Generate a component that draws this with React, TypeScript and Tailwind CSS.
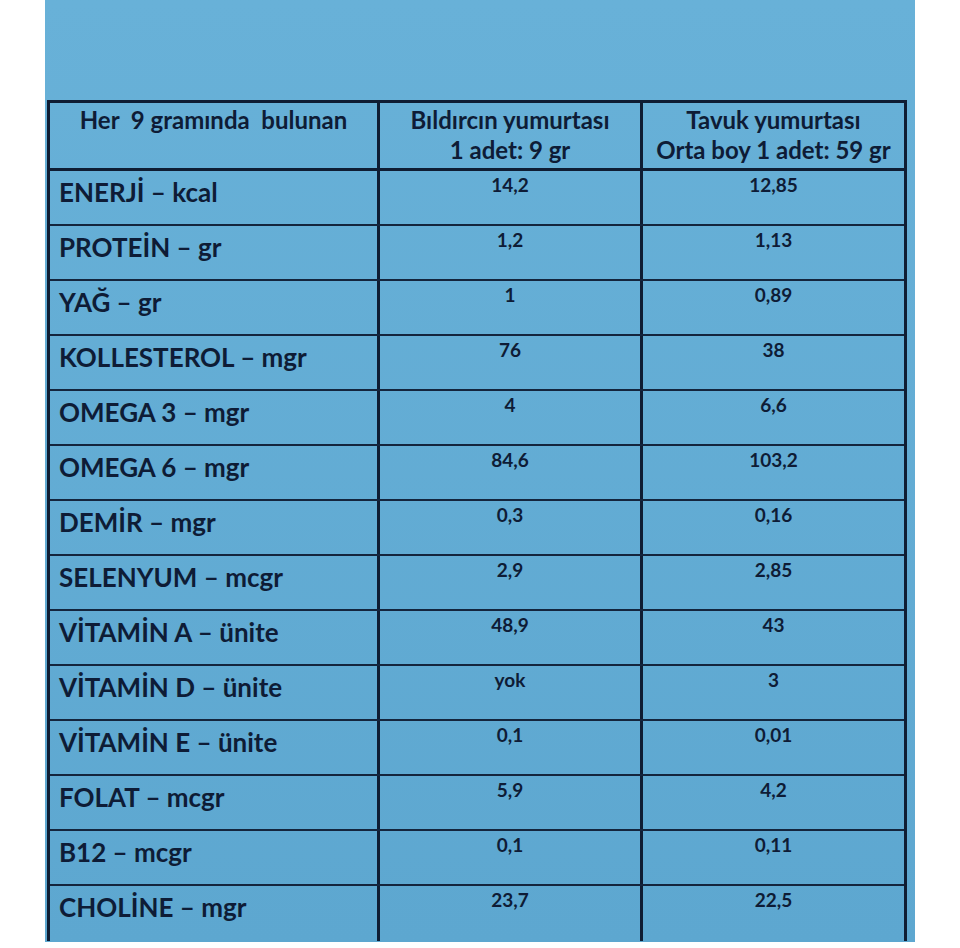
const rows: [string, string, string][] = [
  ['ENERJİ – kcal', '14,2', '12,85'],
  ['PROTEİN – gr', '1,2', '1,13'],
  ['YAĞ – gr', '1', '0,89'],
  ['KOLLESTEROL – mgr', '76', '38'],
  ['OMEGA 3 – mgr', '4', '6,6'],
  ['OMEGA 6 – mgr', '84,6', '103,2'],
  ['DEMİR – mgr', '0,3', '0,16'],
  ['SELENYUM – mcgr', '2,9', '2,85'],
  ['VİTAMİN A – ünite', '48,9', '43'],
  ['VİTAMİN D – ünite', 'yok', '3'],
  ['VİTAMİN E – ünite', '0,1', '0,01'],
  ['FOLAT – mcgr', '5,9', '4,2'],
  ['B12 – mcgr', '0,1', '0,11'],
  ['CHOLİNE – mgr', '23,7', '22,5'],
];

export default function App() {
  return (
    <div className="w-[960px] h-[948px] bg-white overflow-hidden font-['Lato',sans-serif] font-bold text-[#0e1c36]">
      <div className="ml-[45px] w-[870px] h-[942px] bg-gradient-to-b from-[#68b1d8] to-[#5da7d0] pt-[100px] pl-[2px] overflow-hidden">
        <div className="w-[860px] border-l-[3px] border-t-[3px] border-r-[3px] border-[#0f1d33]">
          <div className="grid grid-cols-[330px_263px_1fr] h-[68px] border-b-[3px] border-[#0f1d33] text-[24px] leading-[30px]">
            <div className="border-r-[3px] border-[#0f1d33] text-center pt-[2px] whitespace-pre">Her  9 gramında  bulunan</div>
            <div className="border-r-[3px] border-[#0f1d33] text-center pt-[2px]">
              <div>Bıldırcın yumurtası</div>
              <div>1 adet: 9 gr</div>
            </div>
            <div className="text-center pt-[2px] whitespace-nowrap">
              <div>Tavuk yumurtası</div>
              <div>Orta boy 1 adet: 59 gr</div>
            </div>
          </div>
          {rows.map(([label, quail, hen], i) => (
            <div
              key={label}
              className={`grid grid-cols-[330px_263px_1fr] h-[55px] ${i < rows.length - 1 ? 'border-b-2 border-[#14253d]' : ''}`}
            >
              <div className="border-r-[3px] border-[#0f1d33] pl-[9px] pt-[6px] text-[26px] leading-[30px]">
                {label}
              </div>
              <div className="border-r-[3px] border-[#0f1d33] text-center pt-[3px] text-[19px] leading-[22px]">{quail}</div>
              <div className="text-center pt-[3px] text-[19px] leading-[22px]">{hen}</div>
            </div>
          ))}
        </div>
      </div>
    </div>
  );
}
